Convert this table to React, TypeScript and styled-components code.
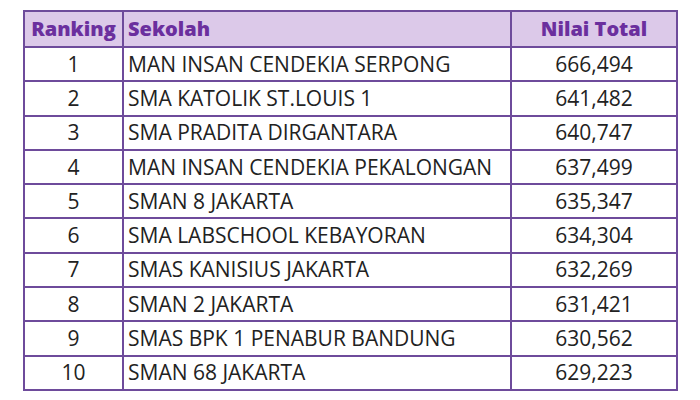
import React from "react";
import styled, { createGlobalStyle } from "styled-components";

const Global = createGlobalStyle`
  html, body { margin: 0; padding: 0; background: #ffffff; }
  body { width: 700px; height: 400px; overflow: hidden; }
`;

const Page = styled.div`
  padding: 10px 0 0 23px;
`;

const Table = styled.table`
  border-collapse: collapse;
  table-layout: fixed;
  width: 653px;
  font-family: "Open Sans", "Liberation Sans", sans-serif;
  border: 2px solid #6e4b9b;
`;

const Col = styled.col<{ $w: number }>`
  width: ${(p) => p.$w}px;
`;

const HeadCell = styled.th<{ $align: string }>`
  height: 34px;
  padding: 0 4px;
  background: #dcc9e9;
  color: #6b2f9e;
  font-size: 20px;
  font-weight: 800;
  text-align: ${(p) => p.$align};
  border: 2px solid #6e4b9b;
  line-height: 1;
  white-space: nowrap;
`;

const Cell = styled.td<{ $align: string }>`
  height: 32.3px;
  padding: 0 4px;
  color: #222222;
  font-size: 21px;
  text-align: ${(p) => p.$align};
  border: 2px solid #6e4b9b;
  line-height: 1;
  white-space: nowrap;
`;

const rows: [string, string, string][] = [
  ["1", "MAN INSAN CENDEKIA SERPONG", "666,494"],
  ["2", "SMA KATOLIK ST.LOUIS 1", "641,482"],
  ["3", "SMA PRADITA DIRGANTARA", "640,747"],
  ["4", "MAN INSAN CENDEKIA PEKALONGAN", "637,499"],
  ["5", "SMAN 8 JAKARTA", "635,347"],
  ["6", "SMA LABSCHOOL KEBAYORAN", "634,304"],
  ["7", "SMAS KANISIUS JAKARTA", "632,269"],
  ["8", "SMAN 2 JAKARTA", "631,421"],
  ["9", "SMAS BPK 1 PENABUR BANDUNG", "630,562"],
  ["10", "SMAN 68 JAKARTA", "629,223"],
];

export default function App() {
  return (
    <>
      <Global />
      <Page>
        <Table>
          <colgroup>
            <Col $w={99} />
            <Col $w={388} />
            <Col $w={166} />
          </colgroup>
          <thead>
            <tr>
              <HeadCell $align="center">Ranking</HeadCell>
              <HeadCell $align="left">Sekolah</HeadCell>
              <HeadCell $align="center">Nilai Total</HeadCell>
            </tr>
          </thead>
          <tbody>
            {rows.map(([r, s, n]) => (
              <tr key={r}>
                <Cell $align="center">{r}</Cell>
                <Cell $align="left">{s}</Cell>
                <Cell $align="center">{n}</Cell>
              </tr>
            ))}
          </tbody>
        </Table>
      </Page>
    </>
  );
}
